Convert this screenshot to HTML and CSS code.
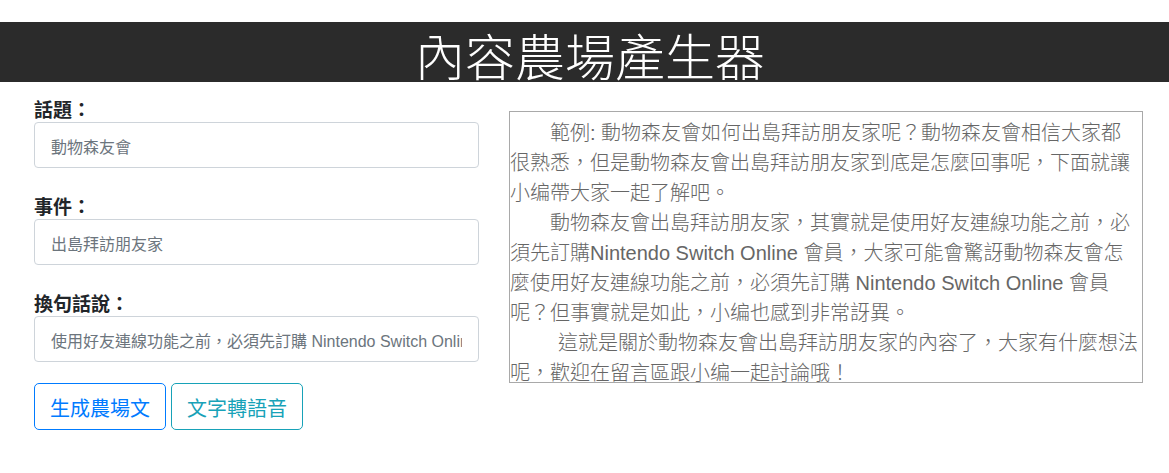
FILE: index.html
```html
<!DOCTYPE html>
<html lang="zh-Hant">
<head>
    <meta charset="UTF-8">
    <meta name="viewport" content="width=device-width, initial-scale=1.0">
    <title>內容農場產生器</title>
    <link rel="stylesheet" href="styles.css">
</head>
<body>

    <h1 class="banner">內容農場產生器</h1>

    <div class="main">
        <div class="form-col">
            <div class="field">
                <label for="topic">話題：</label>
                <input id="topic" class="form-control" type="text" placeholder="動物森友會">
            </div>
            <div class="field">
                <label for="event">事件：</label>
                <input id="event" class="form-control" type="text" placeholder="出島拜訪朋友家">
            </div>
            <div class="field">
                <label for="reword">換句話說：</label>
                <input id="reword" class="form-control" type="text" placeholder="使用好友連線功能之前，必須先訂購 Nintendo Switch Online 會員">
            </div>
            <div class="actions">
                <button class="btn btn-primary">生成農場文</button>
                <button class="btn btn-info">文字轉語音</button>
            </div>
        </div>

        <div class="output">
            <p>範例: 動物森友會如何出島拜訪朋友家呢？動物森友會相信大家都<br>很熟悉，但是動物森友會出島拜訪朋友家到底是怎麼回事呢，下面就讓<br>小编帶大家一起了解吧。</p>
            <p>動物森友會出島拜訪朋友家，其實就是使用好友連線功能之前，必<br>須先訂購Nintendo Switch Online 會員，大家可能會驚訝動物森友會怎<br>麼使用好友連線功能之前，必須先訂購 Nintendo Switch Online 會員<br>呢？但事實就是如此，小编也感到非常訝異。</p>
            <p class="last">這就是關於動物森友會出島拜訪朋友家的內容了，大家有什麼想法<br>呢，歡迎在留言區跟小编一起討論哦！</p>
        </div>
    </div>

</body>
</html>
```

FILE: styles.css
```css
/* General Styles */
body {
    margin: 0;
    font-family: "Liberation Sans", "Noto Sans CJK TC", sans-serif;
    color: #212529;
    background: #fff;
}

.banner {
    margin: 22px 0 0;
    padding-left: 11px;
    height: 60px;
    overflow: hidden;
    background-color: #2b2b2b;
    color: #fff;
    text-align: center;
    font-family: "Noto Sans CJK TC", sans-serif;
    font-size: 50px;
    font-weight: 300;
    line-height: 64px;
}

.main {
    display: grid;
    grid-template-columns: 445px 634px;
    column-gap: 30px;
    padding-left: 34px;
}

/* form column */
.form-col {
    padding-top: 15px;
}
.field {
    margin-bottom: 26px;
}
.field:nth-child(3) {
    margin-bottom: 21px;
}
.field label {
    display: block;
    margin-bottom: 1px;
    font-family: "Noto Sans CJK TC", sans-serif;
    font-size: 19px;
    font-weight: 700;
    line-height: 24px;
}
.form-control {
    display: block;
    width: 100%;
    height: 46px;
    box-sizing: border-box;
    padding: 6px 16px 0;
    border: 1px solid #ced4da;
    border-radius: 4px;
    font-family: "Liberation Sans", "Noto Sans CJK TC", sans-serif;
    font-size: 16px;
    color: #495057;
}
.form-control::placeholder {
    color: #6c757d;
    opacity: 1;
}

.actions {
    display: flex;
    gap: 5px;
}
.btn {
    padding: 9px 15px 7px;
    background: #fff;
    border: 1px solid;
    border-radius: 5px;
    font-family: "Noto Sans CJK TC", sans-serif;
    font-size: 20px;
    line-height: 29px;
    cursor: pointer;
}
.btn-primary {
    color: #007bff;
    border-color: #007bff;
}
.btn-info {
    color: #17a2b8;
    border-color: #17a2b8;
}

/* generated article */
.output {
    margin-top: 29px;
    height: 272px;
    box-sizing: border-box;
    padding-top: 6px;
    border: 1px solid #a9a9a9;
    overflow: hidden;
    white-space: nowrap;
    font-size: 20px;
    font-weight: 300;
    line-height: 30px;
    color: #666;
}
.output p {
    margin: 0;
    text-indent: 2em;
}
.output p.last {
    text-indent: 2.4em;
}
```
